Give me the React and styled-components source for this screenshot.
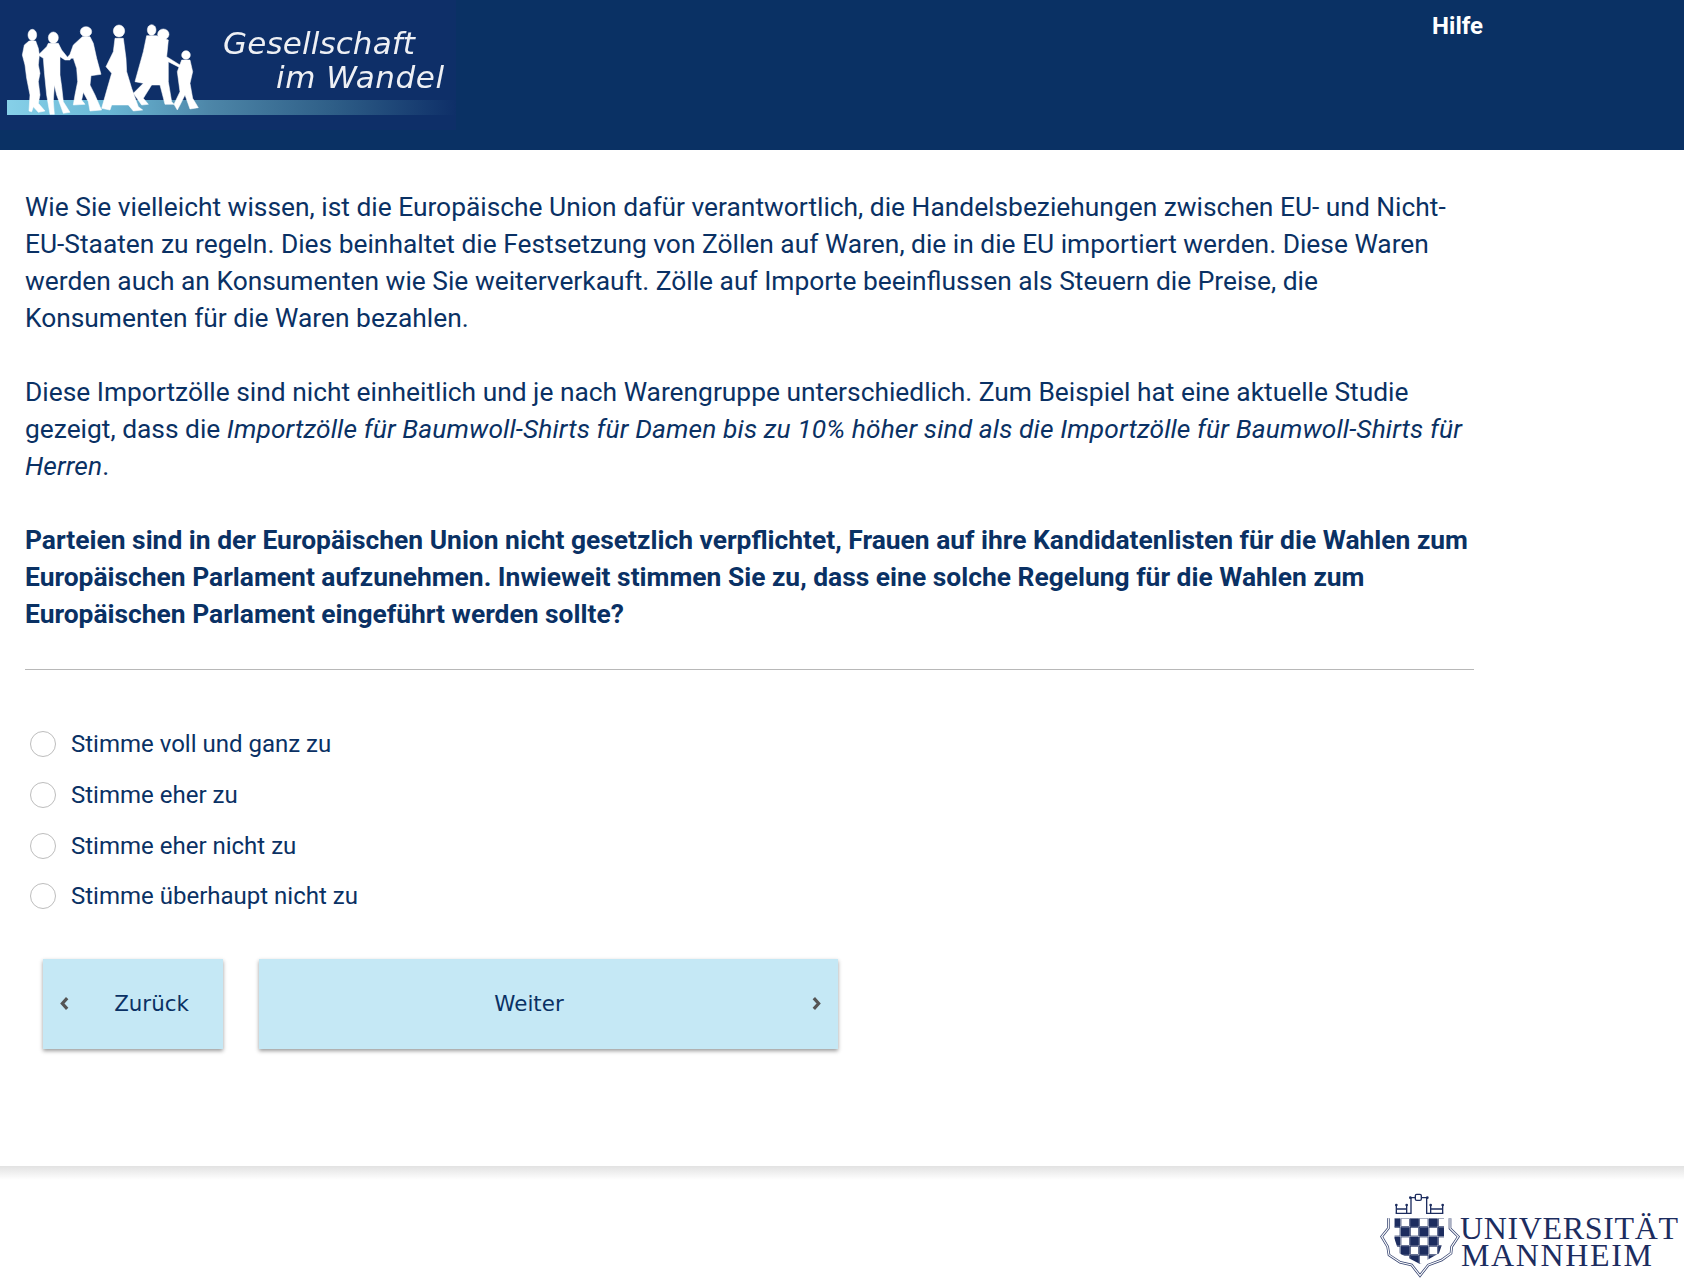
import React from 'react'
import styled, {createGlobalStyle} from 'styled-components'

const GlobalStyle = createGlobalStyle`
    html, body {
        margin: 0;
        padding: 0;
        background: #fff;
    }
    body {
        font-family: Roboto, "Liberation Sans", sans-serif;
        color: #0a3164;
    }
`

const answers = [
    "Stimme voll und ganz zu",
    "Stimme eher zu",
    "Stimme eher nicht zu",
    "Stimme überhaupt nicht zu",
]

function StudyLogo() {
    return (
        <svg width="460" height="132" viewBox="0 0 460 132">
            <defs>
                <linearGradient id="bar" x1="0" x2="1" y1="0" y2="0">
                    <stop offset="0" stopColor="#86d0e8" />
                    <stop offset="0.22" stopColor="#6bb8d6" />
                    <stop offset="0.45" stopColor="#4d86a8" />
                    <stop offset="0.72" stopColor="#2f5f88" />
                    <stop offset="1" stopColor="#0e2f68" />
                </linearGradient>
                <filter id="soft">
                    <feGaussianBlur stdDeviation="0.6" />
                </filter>
            </defs>
            <rect width="456" height="130" fill="#0e2f68" />
            <rect x="7" y="100" width="449" height="15" fill="url(#bar)" />
            <g fill="#fff" stroke="#fff" strokeWidth="1.6" strokeLinejoin="round" filter="url(#soft)">
                <g transform="translate(5 15) scale(0.3333)">
                    <ellipse cx="82" cy="60" rx="13" ry="17" />
                    <path d="M72 78 L92 78 L100 100 L103 120 L100 150 L105 175 L100 200 L105 240 L100 265 L120 288 L100 292 L85 275 L80 290 L72 288 L75 240 L65 190 L60 150 L52 120 L58 90 Z" />
                    <ellipse cx="145" cy="68" rx="15" ry="17" />
                    <path d="M130 85 L160 85 L170 105 L190 130 L205 115 L195 135 L180 135 L165 125 L165 180 L170 215 L175 260 L195 292 L175 295 L155 240 L148 210 L145 260 L148 298 L135 298 L125 240 L118 170 L115 130 L100 120 L125 95 Z" />
                    <ellipse cx="243" cy="50" rx="17" ry="15" />
                    <path d="M232 65 L255 65 L265 85 L275 130 L288 178 L258 182 L255 210 L270 240 L285 275 L290 285 L255 288 L250 260 L235 232 L230 255 L240 268 L205 270 L210 240 L218 200 L215 160 L205 130 L185 130 L195 118 L205 90 Z" />
                </g>
                <g transform="translate(100 15) scale(0.3333)">
                    <ellipse cx="57" cy="48" rx="17" ry="18" />
                    <path d="M45 70 L70 70 L78 130 L80 170 L95 220 L115 275 L128 285 L100 288 L85 270 L35 270 L30 285 L5 280 L22 220 L35 175 L18 155 L40 110 Z" />
                    <ellipse cx="155" cy="45" rx="13" ry="16" />
                    <ellipse cx="190" cy="58" rx="17" ry="16" />
                    <path d="M140 62 L170 62 L205 75 L200 125 L240 150 L240 158 L205 140 L205 200 L215 260 L222 268 L195 268 L180 210 L155 210 L130 250 L145 268 L125 270 L100 235 L130 205 L105 200 L130 110 Z" />
                    <ellipse cx="258" cy="120" rx="13" ry="13" />
                    <path d="M245 135 L270 135 L278 170 L270 205 L278 250 L295 278 L270 282 L255 240 L240 270 L232 285 L222 268 L240 230 L232 170 Z" />
                </g>
            </g>
            <g fill="#fff" fontFamily="'DejaVu Sans', sans-serif" fontStyle="italic" fontSize="31" opacity="0.93">
                <text x="223" y="54" textLength="192">Gesellschaft</text>
                <text x="276" y="88" textLength="168">im Wandel</text>
            </g>
        </svg>
    )
}

function UniversityLogo() {
    const squares = []
    for (let row = 0; row < 5; row++) {
        for (let col = 0; col < 6; col++) {
            const dark = (row + col) % 2 === 0
            squares.push(
                <rect
                    key={row + "-" + col}
                    x={50 + col * 28}
                    y={100 + row * 28}
                    width="25"
                    height="25"
                    fill={dark ? "#1d2d5f" : "#fff"}
                    stroke="#1d2d5f"
                    strokeWidth="2"
                />
            )
        }
    }
    const outline = "M40 100 L40 130 L20 155 L38 185 L42 210 L75 232 L110 240 L135 272 L160 240 L200 225 L228 205 L230 185 L250 155 L225 130 L225 100"
    return (
        <svg width="320" height="94" viewBox="1364 1185 320 94">
            <defs>
                <clipPath id="shield">
                    <path d="M58 100 L207 100 L207 160 L192 205 L135 237 L73 205 L58 160 Z" />
                </clipPath>
            </defs>
            <g transform="translate(1375 1185) scale(0.3333)">
                <path d={outline} fill="none" stroke="#34426f" strokeWidth="8" />
                <path d={outline} fill="none" stroke="#fff" strokeWidth="3.5" />
                <g clipPath="url(#shield)">{squares}</g>
                <g fill="none" stroke="#1d2d5f" strokeWidth="4">
                    <rect x="121" y="28" width="18" height="18" rx="4" />
                    <path d="M106 38 H121 M139 38 H157 M108 38 V85 H62 M155 38 V85 H205" />
                    <path d="M64 60 V85 M95 60 V85 M64 72 H95 M167 60 V85 M203 60 V85 M167 72 H203" />
                </g>
                <g fill="#1d2d5f">
                    <circle cx="106" cy="38" r="4" />
                    <circle cx="157" cy="38" r="4" />
                    <circle cx="64" cy="60" r="4" />
                    <circle cx="95" cy="60" r="4" />
                    <circle cx="167" cy="60" r="4" />
                    <circle cx="203" cy="60" r="4" />
                </g>
            </g>
            <g fill="#1d2d5f" fontFamily="'Liberation Serif', serif" fontSize="32">
                <text x="1460" y="1239" textLength="218">UNIVERSITÄT</text>
                <text x="1461" y="1266" textLength="191">MANNHEIM</text>
            </g>
        </svg>
    )
}

export default function App() {
    return (
        <Page>
            <GlobalStyle />
            <Header>
                <StudyLogo />
                <HelpLink>Hilfe</HelpLink>
            </Header>
            <Main>
                <Paragraph>
                    Wie Sie vielleicht wissen, ist die Europäische Union dafür verantwortlich, die Handelsbeziehungen zwischen EU- und Nicht-EU-Staaten zu regeln. Dies beinhaltet die Festsetzung von Zöllen auf Waren, die in die EU importiert werden. Diese Waren werden auch an Konsumenten wie Sie weiterverkauft. Zölle auf Importe beeinflussen als Steuern die Preise, die Konsumenten für die Waren bezahlen.
                </Paragraph>
                <Paragraph>
                    Diese Importzölle sind nicht einheitlich und je nach Warengruppe unterschiedlich. Zum Beispiel hat eine aktuelle Studie gezeigt, dass die <Emphasis>Importzölle für Baumwoll-Shirts für Damen bis zu 10% höher sind als die Importzölle für Baumwoll-Shirts für Herren</Emphasis>.
                </Paragraph>
                <Question>
                    Parteien sind in der Europäischen Union nicht gesetzlich verpflichtet, Frauen auf ihre Kandidatenlisten für die Wahlen zum Europäischen Parlament aufzunehmen. Inwieweit stimmen Sie zu, dass eine solche Regelung für die Wahlen zum Europäischen Parlament eingeführt werden sollte?
                </Question>
                <Divider />
                <Answers>
                    {answers.map((text) => (
                        <Answer key={text}>
                            <RadioCircle />
                            {text}
                        </Answer>
                    ))}
                </Answers>
                <Buttons>
                    <NavButton $width={180}>
                        <Chevron viewBox="0 0 10 14"><path d="M7.5 2 L3 7 L7.5 12" /></Chevron>
                        <ButtonLabel $shift={13}>Zurück</ButtonLabel>
                    </NavButton>
                    <NavButton $width={579}>
                        <ButtonLabel $shift={-14}>Weiter</ButtonLabel>
                        <Chevron viewBox="0 0 10 14"><path d="M2.5 2 L7 7 L2.5 12" /></Chevron>
                    </NavButton>
                </Buttons>
            </Main>
            <Footer>
                <UniversityLogo />
            </Footer>
        </Page>
    )
}

const Page = styled.div`
    width: 1684px;
    height: 1279px;
    overflow: hidden;
    background: #fff;
    display: flex;
    flex-direction: column;
`

const Header = styled.header`
    height: 150px;
    background: #0a3164;
    display: flex;
    justify-content: space-between;
    padding-right: 201px;
`

const HelpLink = styled.a`
    color: #fff;
    font-size: 24px;
    font-weight: 700;
    line-height: 52px;
`

const Main = styled.main`
    width: 1449px;
    height: 977px;
    padding: 39px 0 0 25px;
    flex: none;
`

const Paragraph = styled.p`
    margin: 0 0 37px;
    font-size: 26.35px;
    line-height: 37px;
    color: #0a3164;
`

const Emphasis = styled.em`
    letter-spacing: 0.12px;
`

const Question = styled(Paragraph)`
    font-size: 26.4px;
    font-weight: 700;
    margin-bottom: 0;
`

const Divider = styled.hr`
    margin: 36px 0 0;
    border: 0;
    border-top: 1px solid #b8b8b8;
    height: 1px;
`

const Answers = styled.div`
    margin-top: 48px;
    display: flex;
    flex-direction: column;
`

const Answer = styled.label`
    display: flex;
    align-items: center;
    height: 50.7px;
    font-size: 24px;
    color: #0a3164;
    gap: 15px;
    padding-left: 5px;
`

const RadioCircle = styled.span`
    width: 24px;
    height: 24px;
    border: 1px solid #bdbdbd;
    border-radius: 50%;
    background: #fff;
    flex: none;
`

const Buttons = styled.div`
    margin: 37px 0 0 18px;
    display: flex;
    gap: 36px;
`

const NavButton = styled.button`
    width: ${(props) => props.$width}px;
    height: 90px;
    border: 0;
    padding: 0 16px;
    background: #c5e8f5;
    color: #0a3164;
    display: flex;
    align-items: center;
    justify-content: space-between;
    box-shadow: 0 2px 4px rgba(0, 0, 0, 0.4);
    font-family: "DejaVu Sans", Verdana, sans-serif;
    font-size: 21.4px;
`

const ButtonLabel = styled.span`
    flex: 1;
    text-align: center;
    transform: translateX(${(props) => props.$shift}px);
`

const Chevron = styled.svg`
    width: 11px;
    height: 15px;
    flex: none;
    fill: none;
    stroke: #555;
    stroke-width: 3;
`

const Footer = styled.footer`
    flex: 1;
    display: flex;
    justify-content: flex-end;
    align-items: flex-end;
    background: linear-gradient(#e2e2e2, #fff 14px);
`
